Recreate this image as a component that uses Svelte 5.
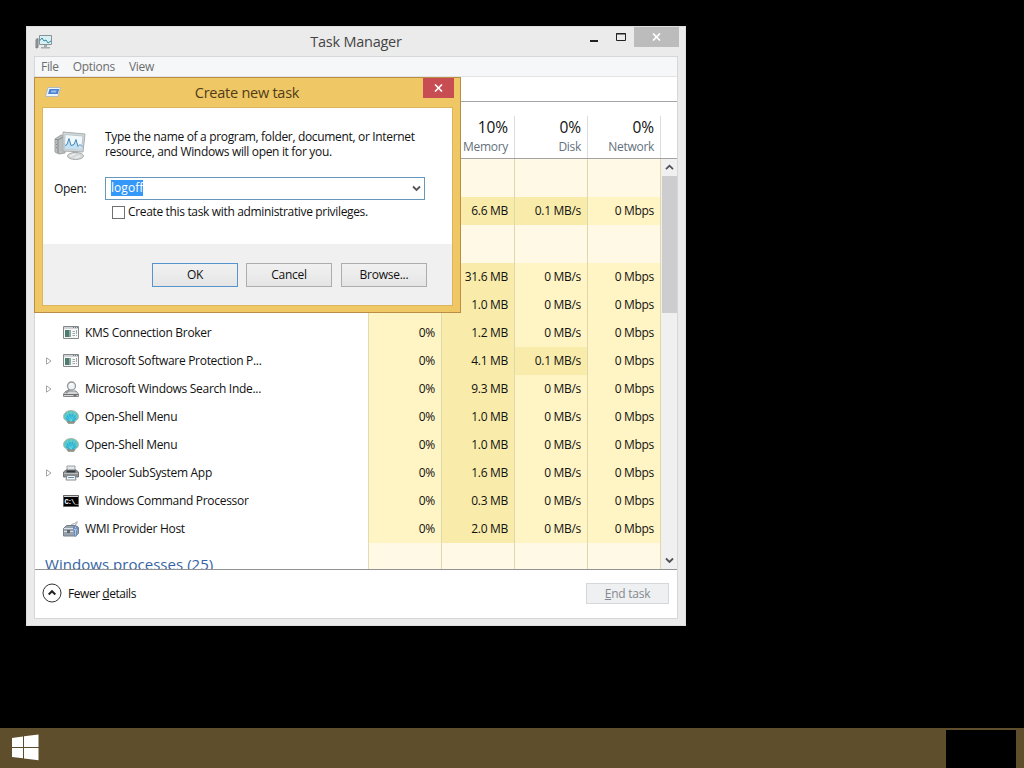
<script lang="ts">
  type Row = {
    name: string;
    icon: string;
    expandable?: boolean;
    cpu: string;
    memory: string;
    disk: string;
    busy?: boolean;
  };

  const menus = ["File", "Options", "View"];

  const columns = [
    { usage: "", label: "" },
    { usage: "10%", label: "Memory" },
    { usage: "0%", label: "Disk" },
    { usage: "0%", label: "Network" },
  ];

  const apps: Row[] = [
    { name: "", icon: "", cpu: "", memory: "6.6 MB", disk: "0.1 MB/s", busy: true },
  ];

  const background: Row[] = [
    { name: "", icon: "", cpu: "", memory: "31.6 MB", disk: "0 MB/s" },
    { name: "", icon: "", cpu: "", memory: "1.0 MB", disk: "0 MB/s" },
    { name: "KMS Connection Broker", icon: "app", cpu: "0%", memory: "1.2 MB", disk: "0 MB/s" },
    { name: "Microsoft Software Protection P...", icon: "app", expandable: true, cpu: "0%", memory: "4.1 MB", disk: "0.1 MB/s", busy: true },
    { name: "Microsoft Windows Search Inde...", icon: "search", expandable: true, cpu: "0%", memory: "9.3 MB", disk: "0 MB/s" },
    { name: "Open-Shell Menu", icon: "shell", cpu: "0%", memory: "1.0 MB", disk: "0 MB/s" },
    { name: "Open-Shell Menu", icon: "shell", cpu: "0%", memory: "1.0 MB", disk: "0 MB/s" },
    { name: "Spooler SubSystem App", icon: "printer", expandable: true, cpu: "0%", memory: "1.6 MB", disk: "0 MB/s" },
    { name: "Windows Command Processor", icon: "cmd", cpu: "0%", memory: "0.3 MB", disk: "0 MB/s" },
    { name: "WMI Provider Host", icon: "wmi", cpu: "0%", memory: "2.0 MB", disk: "0 MB/s" },
  ];

  let command = $state("logoff");
</script>

{#snippet groupRow(title: string)}
  <div class="row group">
    <div class="name groupTitle">{title}</div>
    <div class="cell"></div>
    <div class="cell"></div>
    <div class="cell"></div>
    <div class="cell"></div>
  </div>
{/snippet}

{#snippet processRow(row: Row)}
  <div class="row">
    <div class="name">
      <span class="expander">
        {#if row.expandable}
          <svg width="6" height="8" viewBox="0 0 6 8"><path d="M.5.8v6.4L5 4z" fill="#fff" stroke="#a5a5a5" /></svg>
        {/if}
      </span>
      <span class="icon">{@render appIcon(row.icon)}</span>
      <span>{row.name}</span>
    </div>
    <div class="cell">{row.cpu}</div>
    <div class="cell warm">{row.memory}</div>
    <div class="cell" class:warm={row.busy}>{row.disk}</div>
    <div class="cell">0 Mbps</div>
  </div>
{/snippet}

{#snippet appIcon(kind: string)}
  <svg width="16" height="16" viewBox="0 0 16 16">
    {#if kind === "app"}
      <path d="M.5 1.500h15v12H.5z" fill="#f7f7f7" stroke="#85888a" />
      <path d="M1 2h14v2H1z" fill="#cfd3d5" />
      <path d="M10 2.500h1m1 0h1m1 0h1" stroke="#72787a" />
      <path d="M2 5h6v7H2z" fill="#4b7c6d" />
      <path d="M6 5h2v7H6z" fill="#8ba79e" />
      <path d="M9.500 6.500H12m-2.500 2H12m-2.500 2H12M13.500 5v4m0 1v1" stroke="#a3a8aa" />
    {:else if kind === "search"}
      <path d="M3 10h10l2.500 3v2.500H.5V13z" fill="#d5d5d5" stroke="#85888a" />
      <path d="M1 13.500h14M10.500 14.500h3" stroke="#6e7274" />
      <circle cx="8.500" cy="5" r="4" fill="#f0f4f6" stroke="#94989a" stroke-width="1.300" />
      <path d="M6.500 8.500L3 12" stroke="#8f9395" stroke-width="2" />
      <path d="M6.500 4.500Q7 2.800 9 2.800" fill="none" stroke="#fff" />
    {:else if kind === "shell"}
      <path d="M8 1.500C3.800 1.500.5 4.300.5 7.500c0 2 1.200 3.600 3.300 4.500l1.400 2.500h5.600l1.400-2.500c2.100-.9 3.300-2.500 3.300-4.500 0-3.200-3.300-6-7.500-6z" fill="#5cc4c4" stroke="#b3b9a4" />
      <path d="M8 5c-3 0-5 2-5 5l3 2.500h4l3-2.500c0-3-2-5-5-5z" fill="#22afd8" />
      <path d="M8 12L2 7M8 12L4 3.500M8 12V2M8 12l4-8.500M8 12l6-5" stroke="#7fdcd6" stroke-width=".6" />
      <path d="M3.500 12.500l2-.5 2.500.8 2.500-.8 2 .5-2 2h-5z" fill="#7b9297" />
      <path d="M6 13.500h4" stroke="#b78a68" />
    {:else if kind === "printer"}
      <path d="M4 1h8v5H4z" fill="#e4e7e9" stroke="#9c9fa1" />
      <path d="M3 5h10l2.500 2v5H.5V7z" fill="#8b8f92" stroke="#707477" />
      <path d="M3.500 5.500h9v2h-9z" fill="#34383a" />
      <path d="M1 8.500h14" stroke="#babdbe" />
      <path d="M4 10.500h8l1 4.500H3z" fill="#f3f6f8" stroke="#858a8c" />
      <path d="M5 12.500h6" stroke="#5d91ad" />
    {:else if kind === "cmd"}
      <path d="M.5 2.500h15v11H.5z" fill="#000" stroke="#666" />
      <path d="M1 3.500h14" stroke="#d0d3d6" />
      <text x="1.500" y="11" class="prompt">C:\_</text>
    {:else if kind === "wmi"}
      <path d="M8.500 5V3.500l3-1 3-2M11.500 4.500l3-2.500" fill="none" stroke="#98a0a6" />
      <path d="M.5 7.500l3-3h9l3 2v6l-3 2.500H.5z" fill="#98a2ad" stroke="#76808a" />
      <path d="M1 7.500h10l3-1M1 10.500h9" fill="none" stroke="#dde2e7" />
      <path d="M4 9h3v3H4z" fill="#5f6871" />
      <path d="M10.500 5.500v3l1 1V15h2V9.500l1-1v-3h-1v2h-2v-2z" fill="#a9c5ee" stroke="#5b82bb" stroke-width=".8" />
    {/if}
  </svg>
{/snippet}

<div class="desktop">
  <div class="window">
    <div class="titlebar">
      <svg class="titleIcon" width="18" height="16" viewBox="0 0 18 16">
        <path d="M1 5.500l2-1v9l-2 .5z" fill="#98a0a2" stroke="#777f82" />
        <path d="M4.500 1.500h12v9h-12z" fill="#d5f1f5" stroke="#899396" />
        <path d="M5 6.500l2-2.500 2 3 2-1 2 3 3-2" fill="none" stroke="#34879c" />
        <path d="M9 11h3v2h3v1.500H6V13h3z" fill="#a3acad" />
      </svg>
      <span class="title">Task Manager</span>
      <div class="controls">
        <svg width="12" height="12" viewBox="0 0 12 12"><path d="M2 10h8" stroke="#222" stroke-width="2" /></svg>
        <svg class="maximize" width="12" height="12" viewBox="0 0 12 12"><path d="M1.500 2.500h9v7h-9zM1 3h10" fill="none" stroke="#222" /></svg>
        <button class="close" aria-label="Close">
          <svg width="9" height="8" viewBox="0 0 9 8"><path d="M1 .5l7 7m0-7l-7 7" stroke="#fff" stroke-width="1.700" /></svg>
        </button>
      </div>
    </div>

    <div class="client">
      <div class="menubar">
        {#each menus as menu}
          <span>{menu}</span>
        {/each}
      </div>
      <div class="tabs"></div>

      <div class="header">
        <div class="headName"></div>
        {#each columns as column}
          <div class="headCell">
            <span class="usage">{column.usage}</span>
            <span class="label">{column.label}</span>
          </div>
        {/each}
      </div>

      <div class="body">
        <div class="rows">
          {@render groupRow("")}
          {#each apps as row}
            {@render processRow(row)}
          {/each}
          {@render groupRow("")}
          {#each background as row}
            {@render processRow(row)}
          {/each}
          {@render groupRow("Windows processes (25)")}
        </div>
        <div class="scrollbar">
          <span class="arrow"><svg width="9" height="7" viewBox="0 0 9 7"><path d="M1 5.200l3.500-3.500L8 5.200" fill="none" stroke="#505056" stroke-width="1.800" /></svg></span>
          <div class="thumb"></div>
          <span class="arrow"><svg width="9" height="7" viewBox="0 0 9 7"><path d="M1 1.500L4.500 5 8 1.500" fill="none" stroke="#505056" stroke-width="1.800" /></svg></span>
        </div>
      </div>

      <div class="footer">
        <svg width="20" height="20" viewBox="0 0 20 20">
          <circle cx="10" cy="10" r="9" fill="#fff" stroke="#333" />
          <path d="M6.700 11.500L10 8.200l3.300 3.300" fill="none" stroke="#222" stroke-width="2" />
        </svg>
        <span class="fewer">Fewer <u>d</u>etails</span>
        <button class="endTask" disabled><u>E</u>nd task</button>
      </div>
    </div>
  </div>

  <div class="dialog">
    <div class="dialogTitlebar">
      <svg class="runIcon" width="16" height="12" viewBox="0 0 16 12">
        <path d="M3 1.500h12.500L13 10.500H.5z" fill="#edf5fc" stroke="#b3bcc2" />
        <path d="M4.500 3h9.700l-1.400 5H3z" fill="#4d82d2" />
        <path d="M6.500 4.500h5l-.5 2H6z" fill="#9dc0ee" />
      </svg>
      <span class="title">Create new task</span>
      <button class="dialogClose" aria-label="Close">
        <svg width="9" height="8" viewBox="0 0 9 8"><path d="M1 .5l7 7m0-7l-7 7" stroke="#fff" stroke-width="1.600" /></svg>
      </button>
    </div>
    <div class="dialogClient">
      <div class="intro">
        <svg width="32" height="32" viewBox="0 0 32 32">
          <path d="M1 9l6-4 4 1v17l-6 1-4-2z" fill="#b9bdbe" stroke="#a0a4a5" />
          <path d="M1 9l3 1v13M4 10l5-3M2 14l1 1M2 17l1 1" fill="none" stroke="#858b8d" />
          <path d="M9 2l22 2-2 18-20-1z" fill="#d5d8d9" stroke="#a8acae" />
          <path d="M11 4.500l18 1.500-1.500 14-17-1z" fill="#f1f8fc" stroke="#bac7cf" />
          <path d="M11 15.500l2-1 2-6 2 7 3-1 2-5 2 7 4 0v3l-17-.5z" fill="#c5e0f1" />
          <path d="M11 15.500l2-1 2-6 2 7 3-1 2-5 2 7 2-2 2 2" fill="none" stroke="#4088b8" />
          <path d="M18 21l6 .5v3h-5z" fill="#a6abad" />
          <ellipse cx="21.500" cy="26" rx="8" ry="3.500" fill="#d6d9da" stroke="#a7abad" />
          <path d="M16 26l5-2M21 28l5-2" stroke="#f6f6f6" />
        </svg>
        <p>Type the name of a program, folder, document, or Internet<br />resource, and Windows will open it for you.</p>
      </div>
      <div class="openLine">
        <span class="openLabel">Open:</span>
        <div class="combo">
          <span class="selected">{command}</span>
          <svg width="9" height="7" viewBox="0 0 9 7"><path d="M1 1.500L4.500 5 8 1.500" fill="none" stroke="#555" stroke-width="1.800" /></svg>
        </div>
      </div>
      <div class="admin">
        <span class="checkbox"></span>
        <span>Create this task with administrative privileges.</span>
      </div>
      <div class="actions">
        <button class="default">OK</button>
        <button>Cancel</button>
        <button class="browse">Browse...</button>
      </div>
    </div>
  </div>

  <div class="taskbar">
    <svg width="27" height="27" viewBox="0 0 27 27">
      <path d="M0 4l11-1.600V13H0zM12 2.300L26.500.5V13H12zM0 14h11v10.300L0 23zM12 14h14.500v12.300L12 24.400z" fill="#fff" />
    </svg>
    <div class="tray"></div>
  </div>
</div>

<style>
  :global(body) {
    background: #000;
  }

  .desktop {
    position: relative;
    width: 1024px;
    height: 768px;
    overflow: hidden;
    background: #000;
    font-family: "Open Sans", "Noto Sans", sans-serif;
    font-size: 12px;
    letter-spacing: -0.3px;
    line-height: 16px;
    color: #111;
  }

  .desktop * {
    box-sizing: border-box;
  }

  svg {
    display: block;
    flex: none;
  }

  button {
    font: inherit;
    letter-spacing: inherit;
    color: inherit;
    padding: 0;
    border: 0;
  }

  .window {
    position: absolute;
    left: 26px;
    top: 26px;
    width: 660px;
    height: 600px;
    padding: 0 7px 7px;
    border: 1px solid #dedede;
    background: #ebebeb;
  }

  .titlebar {
    display: flex;
    height: 29px;
    align-items: flex-start;
  }

  .titleIcon {
    margin: 7px 0 0 1px;
  }

  .title {
    flex: 1;
    text-align: center;
    font-size: 14.5px;
    letter-spacing: -0.25px;
    line-height: 20px;
    color: #444;
  }

  .titlebar .title {
    padding: 5px 0 0 71px;
  }

  .controls {
    display: flex;
    margin-right: -1px;
  }

  .controls > svg {
    margin: 4px 7px 0 0;
  }

  .controls > .maximize {
    margin: 4px 7px 0 8px;
  }

  .close {
    display: flex;
    align-items: center;
    justify-content: center;
    width: 45px;
    height: 20px;
    background: #bcbcbc;
  }

  .client {
    display: flex;
    flex-direction: column;
    height: 563px;
    border: 1px solid #d5d7d9;
    background: #fff;
  }

  .menubar {
    display: flex;
    gap: 14px;
    height: 20px;
    padding: 2px 0 0 6px;
    border-bottom: 1px solid #e2e4e6;
    background: #f5f7f8;
    color: #6d6d6d;
  }

  .tabs {
    height: 25px;
    border-bottom: 1px solid #a2a5a9;
  }

  .header {
    display: flex;
    height: 57px;
    padding-top: 14px;
    border-bottom: 1px solid #a2a2a2;
  }

  .headName {
    width: 334px;
    border-right: 1px solid #d8dde0;
  }

  .headCell {
    display: flex;
    flex-direction: column;
    width: 73px;
    padding-right: 6px;
    border-right: 1px solid #d8dde0;
    text-align: right;
  }

  .usage {
    height: 21px;
    font-size: 15.5px;
    letter-spacing: -0.1px;
    line-height: 22px;
    white-space: nowrap;
  }

  .label {
    margin-top: 2px;
    color: #64707c;
    letter-spacing: -0.3px;
  }

  .body {
    display: flex;
    height: 411px;
    border-bottom: 1px solid #929292;
  }

  .rows {
    width: 626px;
    height: 410px;
    overflow: hidden;
  }

  .row {
    display: flex;
    height: 28px;
  }

  .group {
    height: 38px;
  }

  .name {
    display: flex;
    align-items: center;
    width: 334px;
    border-right: 1px solid #e2dcb4;
    white-space: nowrap;
  }

  .groupTitle {
    align-items: flex-start;
    padding: 10px 0 0 10px;
    font-size: 15px;
    letter-spacing: 0.04px;
    line-height: 22px;
    color: #3464a4;
  }

  .expander {
    width: 28px;
    padding-left: 11px;
  }

  .icon {
    width: 22px;
  }

  .cell {
    width: 73px;
    padding: 6px 6px 0 0;
    border-right: 1px solid #ded8ad;
    background: #fff4c4;
    text-align: right;
    white-space: nowrap;
  }

  .cell.warm {
    background: #f9ecaa;
  }

  .group .cell {
    background: #fff9e5;
  }

  .prompt {
    font-family: "Liberation Mono", monospace;
    font-size: 7px;
    font-weight: bold;
    letter-spacing: -0.9px;
    fill: #fff;
  }

  .scrollbar {
    display: flex;
    flex-direction: column;
    width: 16px;
    background: #f0f0f1;
  }

  .arrow {
    display: flex;
    align-items: center;
    justify-content: center;
    height: 17px;
  }

  .arrow:last-child {
    margin-top: auto;
  }

  .thumb {
    height: 137px;
    margin: 0 0 0 1px;
    background: #cdcdcf;
  }

  .footer {
    display: flex;
    align-items: flex-start;
    padding: 13px 8px 0 7px;
  }

  .fewer {
    margin: 3px auto 0 6px;
    letter-spacing: -0.45px;
  }

  .endTask {
    width: 83px;
    height: 21px;
    border: 1px solid #d5d8da;
    background: #eff0f1;
    color: #858a90;
    letter-spacing: -0.25px;
  }

  .dialog {
    position: absolute;
    left: 34px;
    top: 77px;
    width: 427px;
    height: 236px;
    padding: 0 7px 7px;
    border: 1px solid #b98d43;
    background: #efc764;
  }

  .dialogTitlebar {
    display: flex;
    align-items: flex-start;
    height: 29px;
  }

  .runIcon {
    margin: 8px 0 0 3px;
  }

  .dialogTitlebar .title {
    padding: 5px 0 0 10px;
    color: #4f3c1b;
  }

  .dialogClose {
    display: flex;
    align-items: center;
    justify-content: center;
    width: 31px;
    height: 20px;
    margin-right: -1px;
    background: #c84d52;
  }

  .dialogClient {
    display: flex;
    flex-direction: column;
    height: 199px;
    border: 1px solid #dcb45c;
    background: #fff;
  }

  .intro {
    display: flex;
    height: 69px;
    padding: 22px 0 0 11px;
  }

  .intro p {
    margin: -1px 0 0 19px;
    letter-spacing: -0.33px;
    line-height: 15px;
    white-space: nowrap;
  }

  .openLine {
    display: flex;
    align-items: center;
    height: 23px;
    padding-left: 11px;
  }

  .openLabel {
    width: 51px;
  }

  .combo {
    display: flex;
    align-items: center;
    justify-content: space-between;
    width: 320px;
    height: 23px;
    padding: 0 3px 0 5px;
    border: 1px solid #6897bd;
  }

  .selected {
    height: 16px;
    margin-top: -1px;
    line-height: 16px;
    letter-spacing: 0.05px;
    background: #3498f8;
    color: #fff;
  }

  .admin {
    display: flex;
    align-items: center;
    gap: 3px;
    height: 16px;
    margin: 4px 0 24px 69px;
    letter-spacing: -0.34px;
    white-space: nowrap;
  }

  .checkbox {
    width: 13px;
    height: 13px;
    border: 1px solid #707070;
  }

  .actions {
    display: flex;
    flex: 1;
    gap: 8px;
    padding: 19px 0 0 109px;
    background: #f0f0f0;
  }

  .actions button {
    width: 86px;
    height: 24px;
    border: 1px solid #adadad;
    background: linear-gradient(#f1f1f1, #e5e5e5);
    letter-spacing: -0.25px;
  }

  .actions .default {
    border-color: #5794cf;
  }

  .actions .browse {
    margin-left: 1px;
  }

  .taskbar {
    position: absolute;
    left: 0;
    bottom: 0;
    display: flex;
    justify-content: space-between;
    width: 1024px;
    height: 40px;
    padding: 6px 8px 0 12px;
    background: #5f4e2c;
  }

  .tray {
    width: 70px;
    height: 38px;
    margin-top: -4px;
    background: #000;
  }
</style>
